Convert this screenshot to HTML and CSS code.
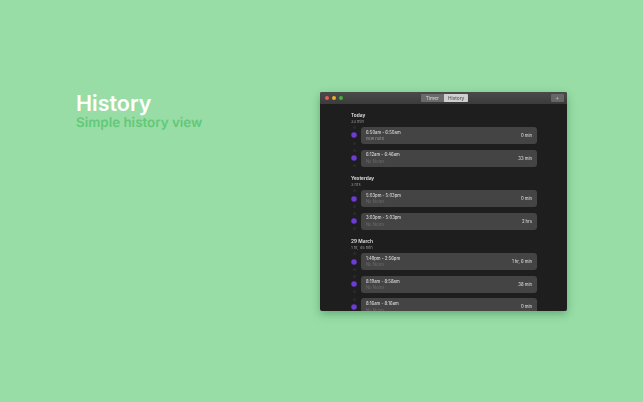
FILE: index.html
```html
<!DOCTYPE html>
<html>
	<head>
		<meta charset="utf-8">
		<title>History</title>
		<link rel="stylesheet" href="styles.css">
	</head>
	<body>
		<div class="hero">
			<h1>History</h1>
			<p>Simple history view</p>
		</div>
		<div class="window">
			<div class="titlebar">
				<div class="lights">
					<span class="light red"></span>
					<span class="light yellow"></span>
					<span class="light green"></span>
				</div>
				<div class="tabs">
					<span class="tab">Timer</span>
					<span class="tab active">History</span>
				</div>
				<span class="add">+</span>
			</div>
			<div class="content">
				<div class="group">
					<h2>Today</h2>
					<p class="total">33 min</p>
					<div class="row">
						<div class="track"><i></i><b></b><i></i></div>
						<div class="card">
							<div class="info"><span class="time">6:50am - 6:50am</span><span class="note light-note">new note</span></div>
							<span class="length">0 min</span>
						</div>
					</div>
					<div class="row">
						<div class="track"><i></i><b></b><i></i></div>
						<div class="card">
							<div class="info"><span class="time">6:12am - 6:46am</span><span class="note">No Notes</span></div>
							<span class="length">33 min</span>
						</div>
					</div>
				</div>
				<div class="group">
					<h2>Yesterday</h2>
					<p class="total">3 hrs</p>
					<div class="row">
						<div class="track"><i></i><b></b><i></i></div>
						<div class="card">
							<div class="info"><span class="time">5:03pm - 5:03pm</span><span class="note">No Notes</span></div>
							<span class="length">0 min</span>
						</div>
					</div>
					<div class="row">
						<div class="track"><i></i><b></b><i></i></div>
						<div class="card">
							<div class="info"><span class="time">3:03pm - 5:03pm</span><span class="note">No Notes</span></div>
							<span class="length">2 hrs</span>
						</div>
					</div>
				</div>
				<div class="group">
					<h2>29 March</h2>
					<p class="total">1 hr, 45 min</p>
					<div class="row">
						<div class="track"><i></i><b></b><i></i></div>
						<div class="card">
							<div class="info"><span class="time">1:49pm - 2:56pm</span><span class="note">No Notes</span></div>
							<span class="length">1 hr, 6 min</span>
						</div>
					</div>
					<div class="row">
						<div class="track"><i></i><b></b><i></i></div>
						<div class="card">
							<div class="info"><span class="time">8:19am - 8:58am</span><span class="note">No Notes</span></div>
							<span class="length">38 min</span>
						</div>
					</div>
					<div class="row">
						<div class="track"><i></i><b></b><i></i></div>
						<div class="card">
							<div class="info"><span class="time">8:16am - 8:16am</span><span class="note">No Notes</span></div>
							<span class="length">0 min</span>
						</div>
					</div>
				</div>
			</div>
		</div>
	</body>
</html>
```

FILE: styles.css
```css
*{ margin: 0; padding: 0; box-sizing: border-box; }
html{ background-color: #98dda6; }
body{
	width: 643px;
	height: 402px;
	overflow: hidden;
	display: flex;
	font-family: Inter, "Liberation Sans", sans-serif;
	padding: 92px 0 0 76px;
}
/*left side*/
.hero{ width: 244px; }
.hero h1{ font-size: 21.5px; line-height: 23px; font-weight: 600; color: #fff; }
.hero p{ font-size: 13.4px; line-height: 17px; font-weight: 600; color: #63c878; text-rendering: geometricPrecision; }
/*app window*/
.window{
	width: 247px;
	height: 218.5px;
	background-color: #1e1e1e;
	border-radius: 2px;
	overflow: hidden;
	box-shadow: 0 3px 8px rgba(40,110,60,.45);
	display: flex;
	flex-direction: column;
	filter: blur(.25px);
}
.titlebar{
	height: 12px;
	flex-shrink: 0;
	background: linear-gradient(#4a4a4a,#3b3b3b);
	display: grid;
	grid-template-columns: 1fr auto 1fr;
	align-items: center;
	padding: 0 3px 0 4.5px;
}
.lights{ display: flex; gap: 2.7px; }
.light{ width: 4.5px; height: 4.5px; border-radius: 50%; }
.red{ background-color: #f0555a; }
.yellow{ background-color: #e5b02a; }
.green{ background-color: #3fb62f; }
.tabs{ display: flex; height: 8px; border-radius: 1px; overflow: hidden; background-color: #6a6a6a; }
.tab{ width: 23.7px; font-size: 4.8px; line-height: 8px; text-align: center; color: #dcdcdc; }
.tab.active{ background-color: #cfcfcf; color: #444; }
.add{ justify-self: end; width: 13.3px; height: 8px; border-radius: 1px; background-color: #666; color: #bbb; font-size: 6px; line-height: 8px; text-align: center; }
.content{ flex: 1; overflow: hidden; padding: 7.5px 30px 0 31px; }
.group{ margin-bottom: 5.1px; }
.group h2{ font-size: 4.8px; line-height: 7px; font-weight: 600; color: #e0e0e0; }
.group .total{ font-size: 4px; line-height: 5px; color: #9a9a9a; margin-bottom: .6px; }
.row{ display: flex; align-items: center; height: 22.7px; gap: 3.9px; }
.track{ width: 6px; display: flex; flex-direction: column; align-items: center; gap: 3.1px; }
.track i{ width: 3px; height: 3px; border-radius: 50%; background-color: #2b2b2b; }
.track b{ width: 6px; height: 6px; border-radius: 50%; background-color: #6c3bd8; transform: scale(.92); }
.card{
	flex: 1;
	height: 17px;
	border-radius: 3px;
	background-color: #444;
	display: flex;
	align-items: center;
	justify-content: space-between;
	padding: 0 5px;
}
.info{ display: flex; flex-direction: column; gap: 0.5px; padding-top: 1px; }
.time{ font-size: 4.2px; line-height: 6px; font-weight: 500; color: #d8d8d8; }
.note{ font-size: 4.2px; line-height: 6px; color: #6c6c6c; }
.note.light-note{ color: #999; }
.length{ font-size: 4.2px; font-weight: 500; color: #d4d4d4; }
```
